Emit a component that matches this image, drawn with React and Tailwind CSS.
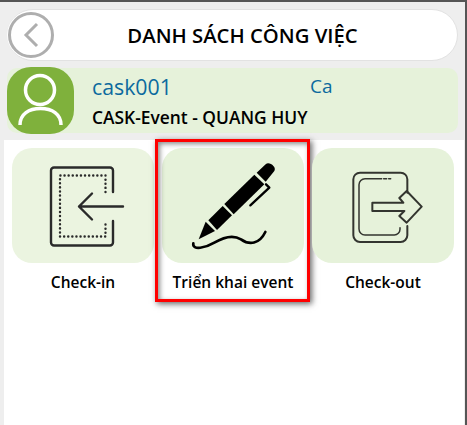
const tiles = [
  { label: 'Check-in', icon: 'in', bg: 'bg-[#ebf4e0]' },
  { label: 'Triển khai event', icon: 'pen', bg: 'bg-[#e6f2da]' },
  { label: 'Check-out', icon: 'out', bg: 'bg-[#e6f2da]' },
];

const CheckInIcon = () => (
  <svg width="84" height="84" viewBox="0 0 84 84" fill="none" stroke="#2a2a2a" strokeLinecap="round" strokeLinejoin="round">
    <path d="M72 28V6.500a3 3 0 0 0-3-3H13a3 3 0 0 0-3 3v72a3 3 0 0 0 3 3h56a3 3 0 0 0 3-3V57" strokeWidth="2.400" />
    <path d="M64.500 28V11.500H19V72.500H64.500V57" strokeWidth="2.400" strokeDasharray="0.1 4" />
    <path d="M82 42.500H38M51 29.500L38 42.500l13 13" strokeWidth="2.400" />
  </svg>
);

const PenIcon = () => (
  <svg width="95" height="100" viewBox="0 0 285 300" fill="#000" stroke="none">
    <path d="M38 250L59 197l28 28z" />
    <path d="M67 193l43-43 28 28-45 44z" />
    <path d="M115 144l90-88 30 29-92 90z" />
    <path d="M212 50l27-25c10-10 34 8 26 20l-26 32z" />
    <path d="M240 85l10 10-57 53" fill="none" stroke="#000" strokeWidth="7" strokeLinecap="round" strokeLinejoin="round" />
    <path d="M22 262C18 285 60 275 85 260c25-15 55-25 80-10 25 18 55 15 73-22" fill="none" stroke="#000" strokeWidth="8" strokeLinecap="round" />
  </svg>
);

const CheckOutIcon = () => (
  <svg width="80" height="80" viewBox="-6 0 240 240" fill="none" stroke="#33352f" strokeLinecap="round" strokeLinejoin="round">
    <path d="M187 80V40a20 20 0 0 0-20-20H45a20 20 0 0 0-20 20v168a20 20 0 0 0 20 20h122a20 20 0 0 0 20-20v-28" strokeWidth="6" />
    <path d="M110 38H60a18 18 0 0 0-18 18v133a18 18 0 0 0 18 18h88a17 17 0 0 0 17-17v-5" strokeWidth="4.500" />
    <path d="M116 38h9M131 38h6" strokeWidth="4.500" />
    <path d="M82 110h93l-12-14 22-21 45 47-45 48-22-20 15-15H82z" strokeWidth="6" />
  </svg>
);

const icons = { in: <CheckInIcon />, pen: <PenIcon />, out: <CheckOutIcon /> };

const Tile = ({ tile }) => (
  <div className="relative flex flex-col items-center">
    <div className={`w-full h-[115px] rounded-[20px] ${tile.bg} flex items-center justify-center`}>
      {icons[tile.icon]}
    </div>
    <div className="mt-2 text-[15.5px] leading-[22px] font-semibold text-black">{tile.label}</div>
    {tile.icon === 'pen' && (
      <div className="absolute left-[-7px] right-[-6px] top-[-9px] h-[163px] border-[3px] border-[#ff0000] shadow-[2px_2px_6px_rgba(0,0,0,0.6),inset_2px_2px_5px_rgba(0,0,0,0.45)]" />
    )}
  </div>
);

export default function App() {
  return (
    <div className="w-[467px] h-[425px] overflow-hidden bg-[#eeeeee] border-t-2 border-r-2 border-[#555555] font-['Open_Sans',sans-serif]">
      <div className="px-[7px] pt-[7px]">
        {/* header */}
        <div className="relative h-[52px] rounded-[26px] bg-white border border-[#e2e2e2] pl-[20px] pt-px flex items-center justify-center">
          <div className="absolute left-[-1px] top-[1px] w-[48px] h-[48px] rounded-full bg-white p-px">
            <div className="w-[46px] h-[46px] rounded-full border-[3px] border-[#aeaeae] flex items-center justify-center">
              <svg width="16" height="26" viewBox="0 0 16 26" fill="none" stroke="#aeaeae" strokeWidth="3">
                <path d="M14 2L3 13l11 11" />
              </svg>
            </div>
          </div>
          <h1 className="text-[20.3px] font-semibold text-black">DANH SÁCH CÔNG VIỆC</h1>
        </div>

        {/* user row */}
        <div className="mt-[7px] h-[65px] rounded-[10px] bg-[#e6f2da] flex">
          <div className="w-[67px] h-[67px] -mt-px rounded-[24px] bg-[#7fb13c] shrink-0">
            <svg width="67" height="67" viewBox="0 0 67 67" fill="none" stroke="#fff" strokeWidth="3.500">
              <circle cx="33" cy="23" r="14.500" />
              <path d="M13 58C13 47 22 41.500 33.500 41.500S54 47 54 58" />
            </svg>
          </div>
          <div className="ml-[18px] flex-1">
            <div className="flex mt-[4px] h-[29px] items-center text-[21.3px] text-[#0c6a9e] font-medium">
              <span className="w-[218px]">cask001</span>
              <span className="text-[19px]">Ca</span>
            </div>
            <div className="mt-[4px] text-[17.4px] leading-[24px] font-semibold text-black">CASK-Event - QUANG HUY</div>
          </div>
        </div>
      </div>

      {/* menu */}
      <div className="mt-[7px] ml-[4px] mr-px h-[300px] bg-white pl-[8px] pr-[10px] pt-[8px] grid grid-cols-3 gap-x-[8px] content-start">
        {tiles.map((tile) => (
          <Tile key={tile.label} tile={tile} />
        ))}
      </div>
    </div>
  );
}
